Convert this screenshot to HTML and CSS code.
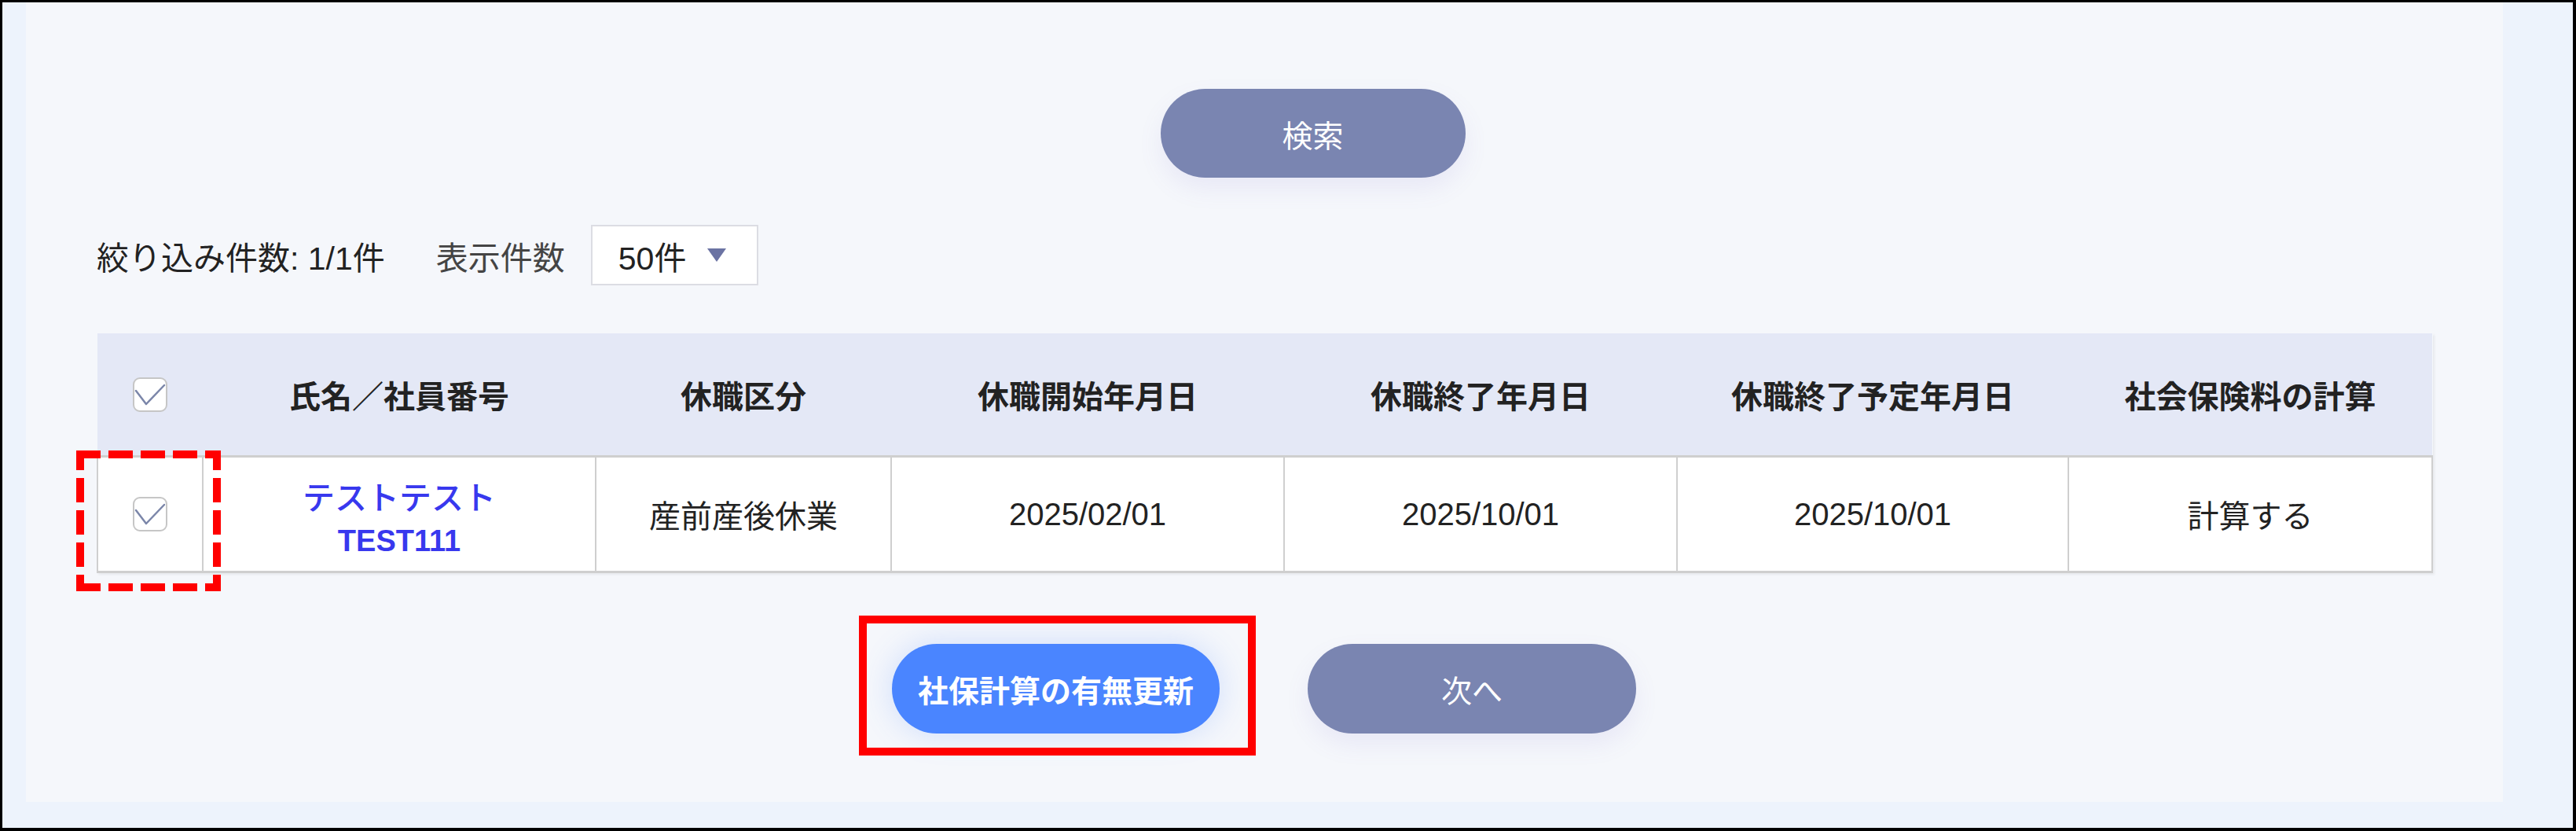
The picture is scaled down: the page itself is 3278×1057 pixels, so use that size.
FILE: index.html
```html
<!DOCTYPE html>
<html lang="ja">
<head>
<meta charset="utf-8">
<title>休職者一覧</title>
<link rel="stylesheet" href="styles.css">
</head>
<body>
<div class="panel">
  <div class="search-row">
    <button class="btn btn-search">検索</button>
  </div>

  <div class="count-row">
    <span class="count-total">絞り込み件数: 1/1件</span>
    <span class="count-label">表示件数</span>
    <div class="select">
      <span class="select-value">50件</span>
      <span class="select-arrow"></span>
    </div>
  </div>

  <div class="table-wrap">
    <table class="list">
      <colgroup>
        <col class="c-check">
        <col class="c-name">
        <col class="c-kind">
        <col class="c-date">
        <col class="c-date">
        <col class="c-date2">
        <col class="c-calc">
      </colgroup>
      <thead>
        <tr>
          <th>
            <svg class="checkbox" viewBox="0 0 44 44" width="44" height="44">
              <rect x="1" y="1" width="42" height="42" rx="8" fill="#fff" stroke="#c6c6c6" stroke-width="2"/>
              <polyline points="4,17 17,34 40,10" fill="none" stroke="#7b86a9" stroke-width="2.5" stroke-linecap="round" stroke-linejoin="round"/>
            </svg>
          </th>
          <th>氏名／社員番号</th>
          <th>休職区分</th>
          <th>休職開始年月日</th>
          <th>休職終了年月日</th>
          <th>休職終了予定年月日</th>
          <th>社会保険料の計算</th>
        </tr>
      </thead>
      <tbody>
        <tr>
          <td>
            <svg class="checkbox" viewBox="0 0 44 44" width="44" height="44">
              <rect x="1" y="1" width="42" height="42" rx="8" fill="#fff" stroke="#c6c6c6" stroke-width="2"/>
              <polyline points="4,17 17,34 40,10" fill="none" stroke="#7b86a9" stroke-width="2.5" stroke-linecap="round" stroke-linejoin="round"/>
            </svg>
          </td>
          <td>
            <div class="emp">
              <a class="emp-name">テストテスト</a>
              <a class="emp-code">TEST111</a>
            </div>
          </td>
          <td>産前産後休業</td>
          <td>2025/02/01</td>
          <td>2025/10/01</td>
          <td>2025/10/01</td>
          <td>計算する</td>
        </tr>
      </tbody>
    </table>
    <svg class="annot-dashed" viewBox="0 0 184 179" width="184" height="179">
      <line x1="0" y1="5" x2="184" y2="5" class="dash-h"/>
      <line x1="0" y1="174" x2="184" y2="174" class="dash-h"/>
      <line x1="5" y1="0" x2="5" y2="179" class="dash-v"/>
      <line x1="179" y1="0" x2="179" y2="179" class="dash-v"/>
    </svg>
  </div>

  <div class="actions">
    <button class="btn btn-update">社保計算の有無更新<span class="annot-solid"></span></button>
    <button class="btn btn-next">次へ</button>
  </div>
</div>
<div class="strip"></div>
</body>
</html>
```

FILE: styles.css
```css
html, body {
  margin: 0;
  padding: 0;
}

body {
  width: 3278px;
  height: 1057px;
  box-sizing: border-box;
  border-style: solid;
  border-color: #000;
  border-width: 3px 4px 4px 3px;
  background: #edf3fc;
  display: flex;
  overflow: hidden;
  font-family: "Liberation Sans", "Noto Sans CJK JP", sans-serif;
  color: #222;
}

.panel {
  flex: none;
  margin-left: 30px;
  width: 3152px;
  height: 1017px;
  box-sizing: border-box;
  background: #f5f7fb;
  padding-top: 110px;
}

.strip {
  flex: 1;
}

.btn {
  display: flex;
  align-items: center;
  justify-content: center;
  border: none;
  border-radius: 57px;
  color: #fff;
  font-family: "Liberation Sans", "Noto Sans CJK JP", sans-serif;
  font-size: 39px;
  padding: 0;
  cursor: pointer;
}

.search-row {
  display: flex;
  justify-content: center;
  margin-left: 90px;
  width: 2971px;
  padding-left: 124px;
  box-sizing: border-box;
}

.btn-search {
  width: 388px;
  height: 113px;
  background: #7a85b1;
  box-shadow: 0 14px 30px rgba(130, 110, 210, 0.10);
}

.count-row {
  display: flex;
  align-items: center;
  margin: 60px 0 0 90px;
  height: 77px;
  font-size: 41px;
}

.count-total {
  color: #222;
}

.count-label {
  margin-left: 65px;
  color: #444;
}

.select {
  margin-left: 33px;
  width: 213px;
  height: 77px;
  box-sizing: border-box;
  border: 2px solid #dcdde3;
  background: #fff;
  display: flex;
  align-items: center;
  padding-left: 33px;
}

.select-value {
  color: #222;
}

.select-arrow {
  margin-left: 27px;
  width: 0;
  height: 0;
  border-left: 12px solid transparent;
  border-right: 12px solid transparent;
  border-top: 17px solid #6b73a3;
}

.table-wrap {
  position: relative;
  margin: 61px 0 0 90px;
  width: 2971px;
}

.list {
  width: 2971px;
  border-collapse: collapse;
  table-layout: fixed;
  box-shadow: 2px 2px 3px rgba(0, 0, 0, 0.06);
}

.c-check { width: 134px; }
.c-name { width: 500px; }
.c-kind { width: 376px; }
.c-date { width: 500px; }
.c-date2 { width: 498px; }
.c-calc { width: 463px; }

.list th {
  height: 155px;
  padding: 0;
  background: #e4e8f6;
  font-size: 40px;
  font-weight: 700;
  color: #222;
  text-align: center;
  vertical-align: middle;
}

.list td {
  height: 144px;
  padding: 0;
  border-style: solid;
  border-color: #cfcfcf;
  border-width: 3px 2px;
  background: #fff;
  font-size: 40px;
  color: #222;
  text-align: center;
  vertical-align: middle;
}

.checkbox {
  display: block;
  margin: 0 auto;
}

.emp {
  padding-top: 14px;
}

.emp-name {
  display: block;
  color: #3838ee;
  font-size: 41px;
  font-weight: 500;
  line-height: 54px;
}

.emp-code {
  display: block;
  color: #3838ee;
  font-size: 38px;
  font-weight: 700;
  line-height: 54px;
}

.annot-dashed {
  position: absolute;
  left: -26px;
  top: 149px;
  overflow: visible;
}

.annot-dashed line {
  stroke: #ff0000;
  stroke-width: 10;
  stroke-dasharray: 31 10;
}

.annot-dashed .dash-v {
  stroke-dashoffset: 6;
}

.actions {
  display: flex;
  justify-content: center;
  gap: 112px;
  margin: 90px 0 0 90px;
  width: 2971px;
}

.btn-update {
  position: relative;
  width: 417px;
  height: 114px;
  background: #4a85ff;
  font-weight: 700;
  box-shadow: 0 0 40px rgba(74, 133, 255, 0.22);
}

.btn-next {
  width: 418px;
  height: 114px;
  background: #7a85b1;
  box-shadow: 0 14px 30px rgba(130, 110, 210, 0.10);
}

.annot-solid {
  position: absolute;
  left: -42px;
  top: -36px;
  width: 505px;
  height: 178px;
  box-sizing: border-box;
  border: 10px solid #ff0000;
  pointer-events: none;
}
```
